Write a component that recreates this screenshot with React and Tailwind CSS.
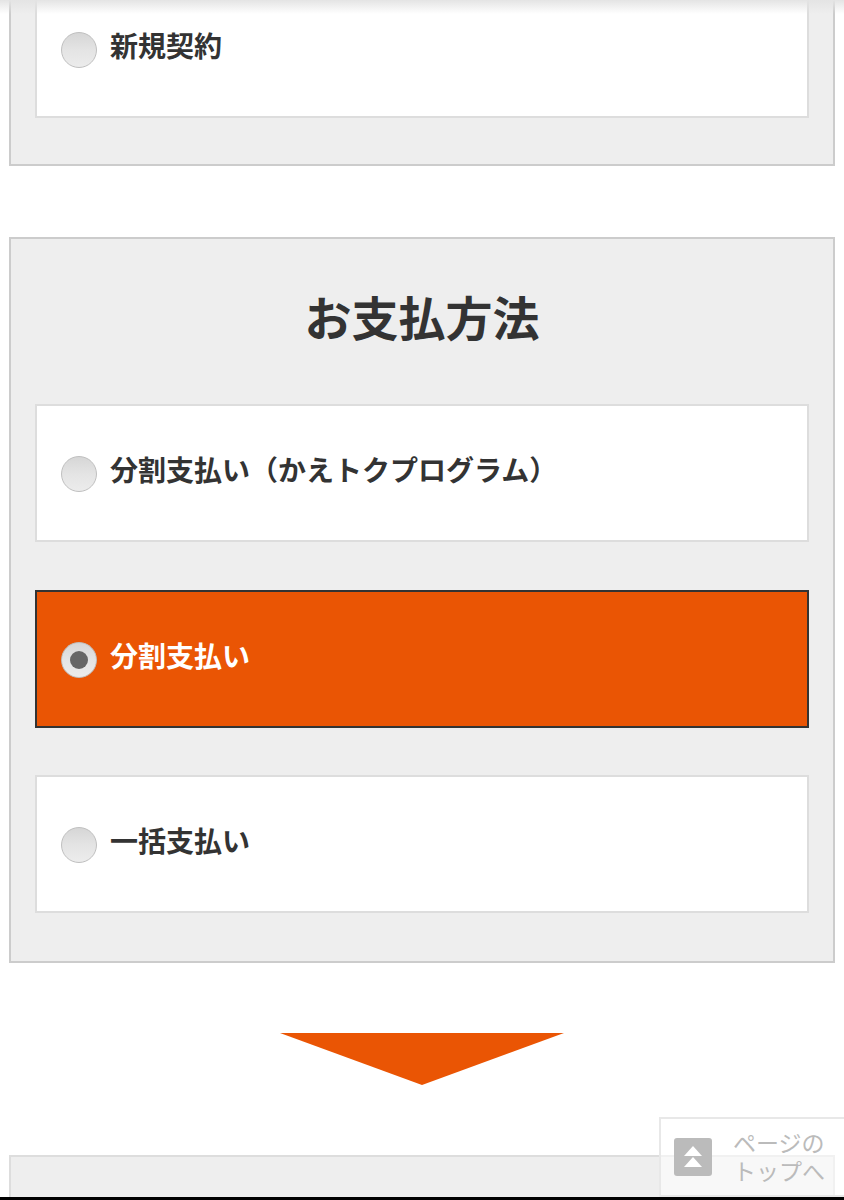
import React from 'react'

const font = { fontFamily: '"Liberation Sans", "Noto Sans CJK JP", sans-serif' }

const Radio = ({ checked }) => (
  <span className="w-[36px] h-[36px] shrink-0 rounded-full border border-[#bfbfbf] bg-gradient-to-b from-[#d6d6d6] via-[#e4e4e4] to-[#ececec] flex items-center justify-center">
    {checked && <span className="w-[18px] h-[18px] rounded-full bg-[#666]" />}
  </span>
)

const Option = ({ label, checked, className = '' }) => (
  <div className={`h-[138px] border-2 flex items-center gap-[13px] pl-[24px] pt-[2px] text-[28px] leading-none font-bold ${checked ? 'bg-[#ea5504] border-[#333] text-white' : 'bg-white border-[#ddd] text-[#333]'} ${className}`}>
    <Radio checked={checked} />
    <span className="-mt-[4px]">{label}</span>
  </div>
)

export default function App() {
  return (
    <div className="relative h-[1200px] overflow-hidden bg-white" style={font}>
      <div className="-mt-[20px] mx-[9px] border-2 border-t-0 border-[#ccc] bg-[#eee] px-[24px] pb-[46px]">
        <Option label="新規契約" />
      </div>

      <div className="mt-[71px] mx-[9px] border-2 border-[#ccc] bg-[#eee] px-[24px] pb-[48px]">
        <h2 className="h-[165px] pb-[4px] flex items-center justify-center text-[47px] leading-none font-bold text-[#333]">お支払方法</h2>
        <Option label="分割支払い（かえトクプログラム）" />
        <Option label="分割支払い" checked className="mt-[48px]" />
        <Option label="一括支払い" className="mt-[47px]" />
      </div>

      <div className="mt-[70px] flex justify-center">
        <svg width="284" height="52" viewBox="0 0 284 52">
          <polygon points="0,0 284,0 142,52" fill="#ea5504" />
        </svg>
      </div>

      <div className="mt-[70px] mx-[9px] h-[60px] border-2 border-b-0 border-[#ddd] bg-[#eee]" />

      <div className="absolute top-0 inset-x-0 h-[14px] bg-gradient-to-b from-[#e4e4e4] to-transparent" />

      <div className="absolute left-[659px] top-[1117px] w-[185px] h-[80px] border-2 border-r-0 border-[#e8e8e8] bg-white/60 flex items-center gap-[21px] pl-[13px]">
        <div className="w-[38px] h-[38px] rounded-[3px] bg-[#bbb] flex items-center justify-center">
          <svg width="22" height="24" viewBox="0 0 22 24" fill="#fff">
            <polygon points="11,1 20,11 2,11" />
            <polygon points="11,12 20,22 2,22" />
          </svg>
        </div>
        <div className="pt-[2px] text-[23px] leading-[28px] text-[#bbb] whitespace-nowrap">ページの<br />トップへ</div>
      </div>

      <div className="absolute bottom-0 inset-x-0 h-[3px] bg-black" />
    </div>
  )
}
